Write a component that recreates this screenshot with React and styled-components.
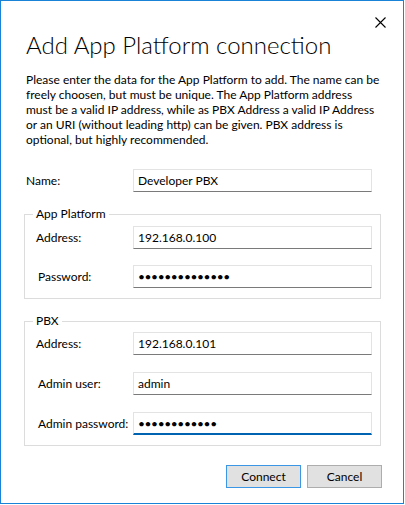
import React from "react";
import styled, { createGlobalStyle } from "styled-components";

const Global = createGlobalStyle`
  html, body { margin: 0; padding: 0; background: #ffffff; }
  * { box-sizing: border-box; }
`;

const Window = styled.div`
  width: 404px;
  height: 504px;
  border: 1px solid #1883d7;
  background: #ffffff;
  font-family: Lato, "Liberation Sans", sans-serif;
  font-size: 12px;
  color: #000000;
  display: flex;
  flex-direction: column;
`;

const TitleBar = styled.div`
  height: 31px;
  display: flex;
  justify-content: flex-end;
  align-items: flex-end;
  padding-right: 13px;
`;

const CloseButton = styled.button`
  width: 20px;
  height: 20px;
  border: 0;
  padding: 0;
  background: transparent;
  display: flex;
  align-items: center;
  justify-content: center;
`;

const Body = styled.div`
  padding: 0 0 0 23px;
  width: 381px;
  display: flex;
  flex-direction: column;
`;

const Title = styled.h1`
  margin: -3px 0 0 2px;
  font-family: Lato, "Open Sans", sans-serif;
  font-weight: 300;
  font-size: 24px;
  line-height: 32px;
  color: #000000;
`;

const Description = styled.p`
  margin: 11px 0 0 2px;
  font-size: 12px;
  line-height: 15px;
  color: #000000;
`;

const Row = styled.div`
  display: flex;
  align-items: center;
  height: 23px;
  padding-left: ${(p) => p.$indent || 0}px;
`;

const Label = styled.label`
  width: ${(p) => p.$width}px;
  padding-left: ${(p) => p.$shift || 0}px;
  color: #000000;
  white-space: nowrap;
`;

const Field = styled.input`
  width: 239px;
  height: 23px;
  border: 1px solid #e3e3e3;
  border-bottom: ${(p) => (p.$active ? "2px solid #0063b1" : "1px solid #7a7a7a")};
  background: #ffffff;
  padding: 0 4px;
  font-family: Lato, "Liberation Sans", sans-serif;
  font-size: ${(p) => (p.type === "password" ? "12px" : "12px")};
  letter-spacing: ${(p) => (p.type === "password" ? "-0.4px" : "0")};
  color: #000000;
  caret-color: #000000;
  outline: none;
`;

const Group = styled.fieldset`
  margin: ${(p) => p.$top}px 0 0 0;
  padding: ${(p) => p.$pad}px 8px 10px 11px;
  border: 1px solid #dcdcdc;
  min-width: 0;
  width: 357px;
`;

const Legend = styled.legend`
  padding: 0 3px;
  margin-left: -3px;
  line-height: 16px;
  font-size: 12px;
  color: #000000;
`;

const Rows = styled.div`
  display: flex;
  flex-direction: column;
  gap: ${(p) => p.$gap}px;
`;

const Buttons = styled.div`
  display: flex;
  justify-content: flex-end;
  gap: 6px;
  margin-top: 19px;
`;

const Button = styled.button`
  width: 75px;
  height: 23px;
  border: 1px solid ${(p) => (p.$primary ? "#3c96e6" : "#adadad")};
  background: #e1e1e1;
  font-family: Lato, "Liberation Sans", sans-serif;
  font-size: 12px;
  color: #000000;
  padding: 0;
`;

export default function App() {
  return (
    <>
      <Global />
      <Window>
        <TitleBar>
          <CloseButton aria-label="Close">
            <svg width="11" height="11" viewBox="0 0 11 11">
              <path d="M0.5 0.5 L10.5 10.5 M10.5 0.5 L0.5 10.5" stroke="#000" strokeWidth="1.1" fill="none" />
            </svg>
          </CloseButton>
        </TitleBar>
        <Body>
          <Title>Add App Platform connection</Title>
          <Description>
            Please enter the data for the App Platform to add. The name can be
            <br />
            freely choosen, but must be unique. The App Platform address
            <br />
            must be a valid IP address, while as PBX Address a valid IP Address
            <br />
            or an URI (without leading http) can be given. PBX address is
            <br />
            optional, but highly recommended.
          </Description>

          <Row $indent={2} style={{ marginTop: 22 }}>
            <Label $width={107}>Name:</Label>
            <Field type="text" defaultValue="Developer PBX" />
          </Row>

          <Group $top={14} $pad={4}>
            <Legend>App Platform</Legend>
            <Rows $gap={16}>
              <Row>
                <Label $width={97}>Address:</Label>
                <Field type="text" defaultValue="192.168.0.100" />
              </Row>
              <Row>
                <Label $width={97} $shift={2}>Password:</Label>
                <Field type="password" defaultValue="aaaaaaaaaaaaaa" />
              </Row>
            </Rows>
          </Group>

          <Group $top={14} $pad={3}>
            <Legend>PBX</Legend>
            <Rows $gap={17}>
              <Row>
                <Label $width={97}>Address:</Label>
                <Field type="text" defaultValue="192.168.0.101" />
              </Row>
              <Row>
                <Label $width={97} $shift={2}>Admin user:</Label>
                <Field type="text" defaultValue="admin" />
              </Row>
              <Row>
                <Label $width={97} $shift={2}>Admin password:</Label>
                <Field type="password" defaultValue="aaaaaaaaaaaa" $active autoFocus />
              </Row>
            </Rows>
          </Group>

          <Buttons>
            <Button $primary>Connect</Button>
            <Button>Cancel</Button>
          </Buttons>
        </Body>
      </Window>
    </>
  );
}
